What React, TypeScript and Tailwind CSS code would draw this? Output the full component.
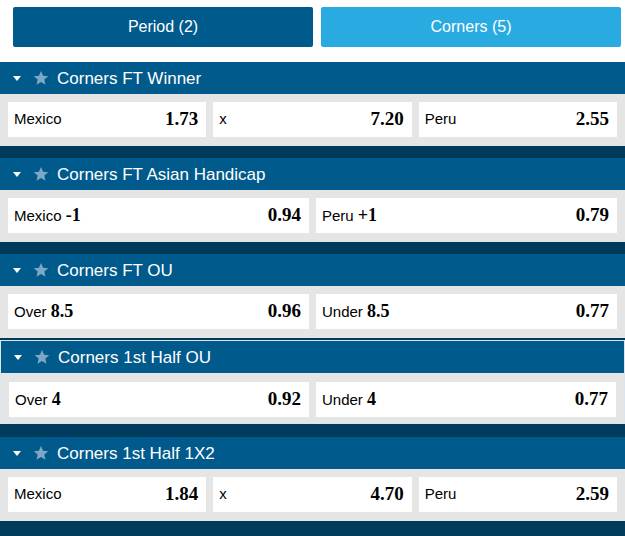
import { Fragment } from "react";

type Pick = { label: string; bold?: string; odds: string };
type Market = { title: string; picks: Pick[]; active?: boolean };

const markets: Market[] = [
  {
    title: "Corners FT Winner",
    picks: [
      { label: "Mexico", odds: "1.73" },
      { label: "x", odds: "7.20" },
      { label: "Peru", odds: "2.55" },
    ],
  },
  {
    title: "Corners FT Asian Handicap",
    picks: [
      { label: "Mexico", bold: "-1", odds: "0.94" },
      { label: "Peru", bold: "+1", odds: "0.79" },
    ],
  },
  {
    title: "Corners FT OU",
    picks: [
      { label: "Over", bold: "8.5", odds: "0.96" },
      { label: "Under", bold: "8.5", odds: "0.77" },
    ],
  },
  {
    title: "Corners 1st Half OU",
    active: true,
    picks: [
      { label: "Over", bold: "4", odds: "0.92" },
      { label: "Under", bold: "4", odds: "0.77" },
    ],
  },
  {
    title: "Corners 1st Half 1X2",
    picks: [
      { label: "Mexico", odds: "1.84" },
      { label: "x", odds: "4.70" },
      { label: "Peru", odds: "2.59" },
    ],
  },
];

function Star() {
  return (
    <svg width="16" height="16" viewBox="0 0 24 24" className="fill-[#7ea6c6]">
      <path d="M12 1.5l3.1 7.1 7.7.7-5.8 5.1 1.7 7.6L12 18l-6.7 4 1.7-7.6-5.8-5.1 7.7-.7z" />
    </svg>
  );
}

function MarketBlock({ market }: { market: Market }) {
  const cols = market.picks.length === 3 ? "grid-cols-3" : "grid-cols-2";
  return (
    <div className={market.active ? "border border-[#dde5ec]" : ""}>
      <div className="flex h-[32px] items-center bg-[#005a8b] pl-[13px] text-[17px] text-white">
        <svg width="8" height="5" viewBox="0 0 8 5" className="fill-white">
          <path d="M0 0h8L4 5z" />
        </svg>
        <span className="ml-[12px]">
          <Star />
        </span>
        <span className="ml-[8px] leading-none">{market.title}</span>
      </div>
      <div
        className={`grid ${cols} gap-[7px] bg-[#e5e5e5] px-[8px] ${
          market.active ? "pt-[9px] pb-[6px]" : "pt-[8px] pb-[9px]"
        }`}
      >
        {market.picks.map((p, i) => (
          <div
            key={i}
            className="flex h-[35px] items-center justify-between bg-white pl-[6px] pr-[8px] text-[15px] text-black"
          >
            <span>
              {p.label}
              {p.bold && (
                <Fragment>
                  {" "}
                  <b className="font-['Liberation_Serif',serif] text-[18px]">
                    {p.bold}
                  </b>
                </Fragment>
              )}
            </span>
            <b className="font-['Liberation_Serif',serif] text-[19px]">
              {p.odds}
            </b>
          </div>
        ))}
      </div>
    </div>
  );
}

export default function App() {
  return (
    <div className="h-[536px] w-[625px] overflow-hidden bg-white font-['Liberation_Sans',Arial,sans-serif]">
      <div className="flex gap-[8px] pl-[13px] pr-[4px] pt-[7px] pb-[15px]">
        <button className="h-[40px] flex-1 rounded-[2px] bg-[#005a8b] text-[16px] text-white">
          Period (2)
        </button>
        <button className="h-[40px] flex-1 rounded-[2px] bg-[#29abe2] text-[16px] text-white">
          Corners (5)
        </button>
      </div>
      <div className="flex h-full flex-col bg-[#003b5c]">
        {markets.map((m, i) => (
          <div
            key={m.title}
            className={
              i === 0
                ? ""
                : m.active
                  ? "mt-[2px]"
                  : i === 4
                    ? "mt-[13px]"
                    : "mt-[12px]"
            }
          >
            <MarketBlock market={m} />
          </div>
        ))}
      </div>
    </div>
  );
}
